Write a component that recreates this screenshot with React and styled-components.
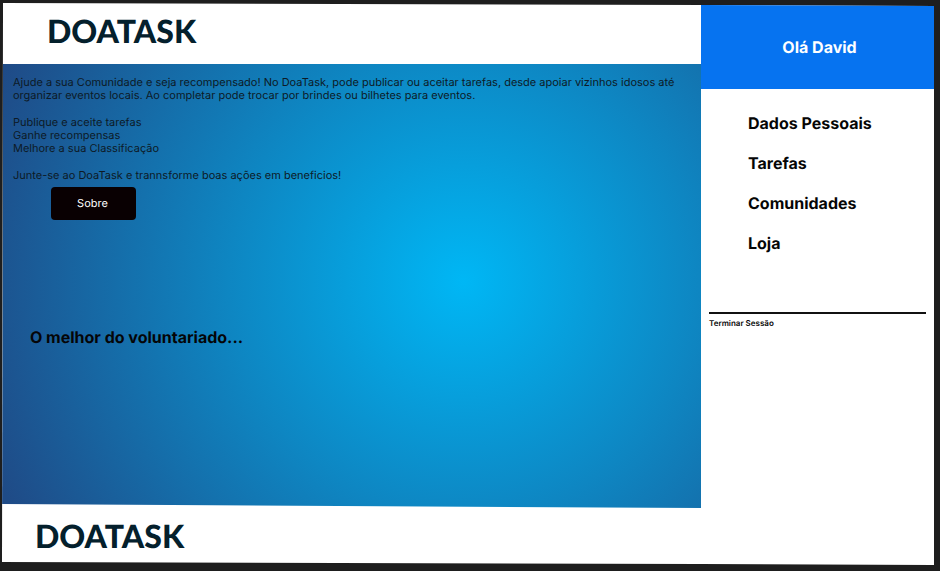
import React from "react";
import styled, { createGlobalStyle } from "styled-components";

const GlobalStyle = createGlobalStyle`
  * { box-sizing: border-box; }
  body {
    margin: 0;
    background: #1e1e1e;
    font-family: Inter, "Liberation Sans", sans-serif;
    color: #0d1a26;
    text-rendering: geometricPrecision;
  }
  p, h1, h2, ul { margin: 0; padding: 0; }
`;

const Shell = styled.div`
  min-height: 100vh;
  display: flex;
  padding: 3px 6px 6px 2px;
`;

const Page = styled.div`
  flex: 1;
  display: grid;
  grid-template-columns: 3fr 1fr;
  background: #fff;
  clip-path: polygon(1px 0, 75% 2px, 100% 3px, 100% 100%, 75% calc(100% - 1px), 0 calc(100% - 3px));
`;

const Main = styled.div`
  display: flex;
  flex-direction: column;
`;

const Band = styled.div`
  display: flex;
  align-items: center;
  height: ${(p) => p.$height}px;
  padding: 0 0 ${(p) => p.$lift}px ${(p) => p.$inset}px;
`;

const Logo = styled.span`
  font-family: Lato, "Liberation Sans", sans-serif;
  font-weight: 900;
  font-size: 32px;
  line-height: 36px;
  color: #04202c;
`;

const Hero = styled.main`
  flex: 1;
  display: flex;
  flex-direction: column;
  align-items: flex-start;
  padding: 12px 10px 0 11px;
  background: radial-gradient(circle at 66% 49%, #00b7f5 0, #0e86c2 235px, #1f4b87 505px);
  clip-path: polygon(1px 0, 100% 0, 100% 100%, 0 calc(100% - 4px));
`;

const Copy = styled.div`
  display: flex;
  flex-direction: column;
  gap: 14px;
  font-size: 11px;
  line-height: 13px;
`;

const Lines = styled.ul`
  list-style: none;
`;

const AboutButton = styled.button`
  width: 85px;
  height: 33px;
  margin: 5px 0 0 38px;
  padding: 0 2px 2px 0;
  border: 0;
  border-radius: 4px;
  background: #090002;
  color: #fff;
  font: 11px Inter, sans-serif;
  text-rendering: inherit;
`;

const Tagline = styled.h2`
  margin: 107px 0 0 17px;
  font-size: 16px;
  line-height: 20px;
  font-weight: 700;
  color: #050507;
`;

const Sidebar = styled.aside`
  display: flex;
  flex-direction: column;
`;

const Greeting = styled.div`
  display: flex;
  align-items: center;
  justify-content: center;
  height: 86px;
  padding: 2px 0 0 4px;
  background: #0673f0;
  color: #fff;
  font-size: 16px;
  font-weight: 700;
`;

const Menu = styled.nav`
  display: flex;
  flex-direction: column;
  align-items: flex-start;
  gap: 20px;
  padding: 24px 0 0 47px;
`;

const MenuLink = styled.a`
  font-size: 16px;
  line-height: 20px;
  font-weight: 700;
  color: #050505;
  text-decoration: none;
`;

const Session = styled.div`
  display: flex;
  margin: 59px 8px 0;
  padding-top: 4px;
  border-top: 2px solid #111;
`;

const LogoutLink = styled.a`
  font-size: 8px;
  line-height: 10px;
  font-weight: 600;
  color: #0a0a0a;
  text-decoration: none;
`;

const sections = ["Dados Pessoais", "Tarefas", "Comunidades", "Loja"];

export default function App() {
  return (
    <>
      <GlobalStyle />
      <Shell>
        <Page>
          <Main>
            <Band as="header" $height={61} $inset={45} $lift={6}>
              <Logo>DOATASK</Logo>
            </Band>
            <Hero>
              <Copy>
                <p>
                  Ajude a sua Comunidade e seja recompensado! No DoaTask, pode publicar ou aceitar
                  tarefas, desde apoiar vizinhos idosos até organizar eventos locais. Ao completar
                  pode trocar por brindes ou bilhetes para eventos.
                </p>
                <Lines>
                  <li>Publique e aceite tarefas</li>
                  <li>Ganhe recompensas</li>
                  <li>Melhore a sua Classificação</li>
                </Lines>
                <p>Junte-se ao DoaTask e trannsforme boas ações em beneficios!</p>
              </Copy>
              <AboutButton type="button">Sobre</AboutButton>
              <Tagline>O melhor do voluntariado...</Tagline>
            </Hero>
            <Band as="footer" $height={57} $inset={33} $lift={2}>
              <Logo>DOATASK</Logo>
            </Band>
          </Main>
          <Sidebar>
            <Greeting>Olá David</Greeting>
            <Menu>
              {sections.map((name) => (
                <MenuLink key={name} href="#">{name}</MenuLink>
              ))}
            </Menu>
            <Session>
              <LogoutLink href="#">Terminar Sessão</LogoutLink>
            </Session>
          </Sidebar>
        </Page>
      </Shell>
    </>
  );
}
